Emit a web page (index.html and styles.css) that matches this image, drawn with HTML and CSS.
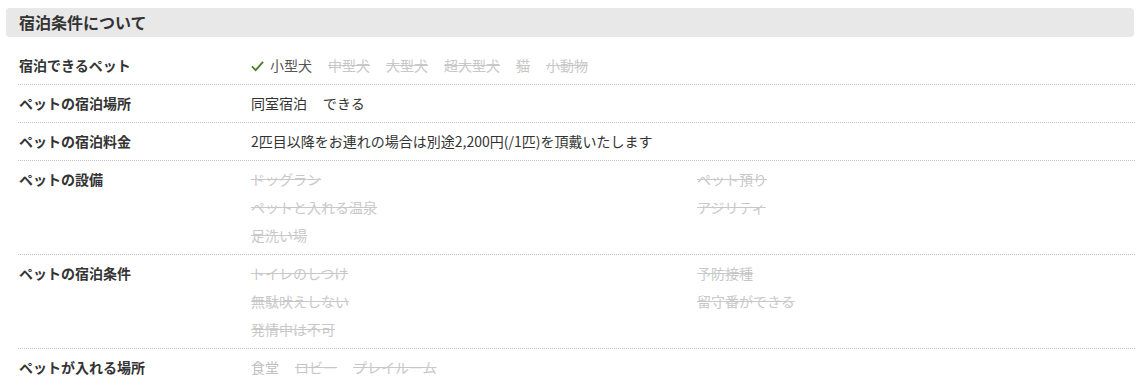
FILE: index.html
```html
<!DOCTYPE html>
<html lang="ja">
<head>
<meta charset="utf-8">
<link rel="stylesheet" href="styles.css">
</head>
<body>
<div class="page">
  <h2 class="section-title">宿泊条件について</h2>
  <div class="table">
    <div class="row">
      <div class="label">宿泊できるペット</div>
      <div class="value inline">
        <span class="item on"><svg class="check" viewBox="0 0 14 12" width="13" height="12"><path d="M1 6.5 L5 10.5 L13 1.5" fill="none" stroke="#4d7d2c" stroke-width="2"/></svg>小型犬</span>
        <span class="item off">中型犬</span>
        <span class="item off">大型犬</span>
        <span class="item off">超大型犬</span>
        <span class="item off">猫</span>
        <span class="item off">小動物</span>
      </div>
    </div>
    <div class="row">
      <div class="label">ペットの宿泊場所</div>
      <div class="value inline">
        <span class="item">同室宿泊</span>
        <span class="item">できる</span>
      </div>
    </div>
    <div class="row">
      <div class="label">ペットの宿泊料金</div>
      <div class="value">2匹目以降をお連れの場合は別途2,200円(/1匹)を頂戴いたします</div>
    </div>
    <div class="row">
      <div class="label">ペットの設備</div>
      <div class="value grid">
        <span class="off">ドッグラン</span>
        <span class="off">ペット預り</span>
        <span class="off">ペットと入れる温泉</span>
        <span class="off">アジリティ</span>
        <span class="off">足洗い場</span>
      </div>
    </div>
    <div class="row">
      <div class="label">ペットの宿泊条件</div>
      <div class="value grid">
        <span class="off">トイレのしつけ</span>
        <span class="off">予防接種</span>
        <span class="off">無駄吠えしない</span>
        <span class="off">留守番ができる</span>
        <span class="off">発情中は不可</span>
      </div>
    </div>
    <div class="row last">
      <div class="label">ペットが入れる場所</div>
      <div class="value inline">
        <span class="item muted">食堂</span>
        <span class="item off">ロビー</span>
        <span class="item off">プレイルーム</span>
      </div>
    </div>
  </div>
</div>
</body>
</html>
```

FILE: styles.css
```css
* { box-sizing: border-box; }
html, body { margin: 0; padding: 0; background: #fff; }
body {
  font-family: "Noto Sans CJK JP", "Noto Sans", sans-serif;
  font-size: 14px;
  color: #333;
}
.page {
  padding: 8px 13px 0 6px;
}
.section-title {
  margin: 0 1px 10px 0;
  height: 29px;
  line-height: 29px;
  padding: 0 0 0 13px;
  background: #e8e8e8;
  border-radius: 4px;
  font-size: 16px;
  font-weight: bold;
  color: #333;
}
.table {
  margin-left: 12px;
}
.row {
  display: grid;
  grid-template-columns: 233px 1fr;
  padding: 8px 0 8px;
  border-bottom: 1px dotted #c4c4c4;
  line-height: 21px;
}
.row.last { border-bottom: none; }
.label {
  font-weight: bold;
  padding-left: 1px;
  color: #333;
}
.value { color: #333; }
.inline {
  display: flex;
  gap: 16px;
}
.item { display: inline-flex; align-items: center; }
.check { margin-right: 6px; }
.on { color: #555; }
.off { color: #c8c8c8; text-decoration: line-through; }
.muted { color: #c0c0c0; }
.grid {
  display: grid;
  grid-template-columns: 446px 1fr;
  row-gap: 7px;
}
```
